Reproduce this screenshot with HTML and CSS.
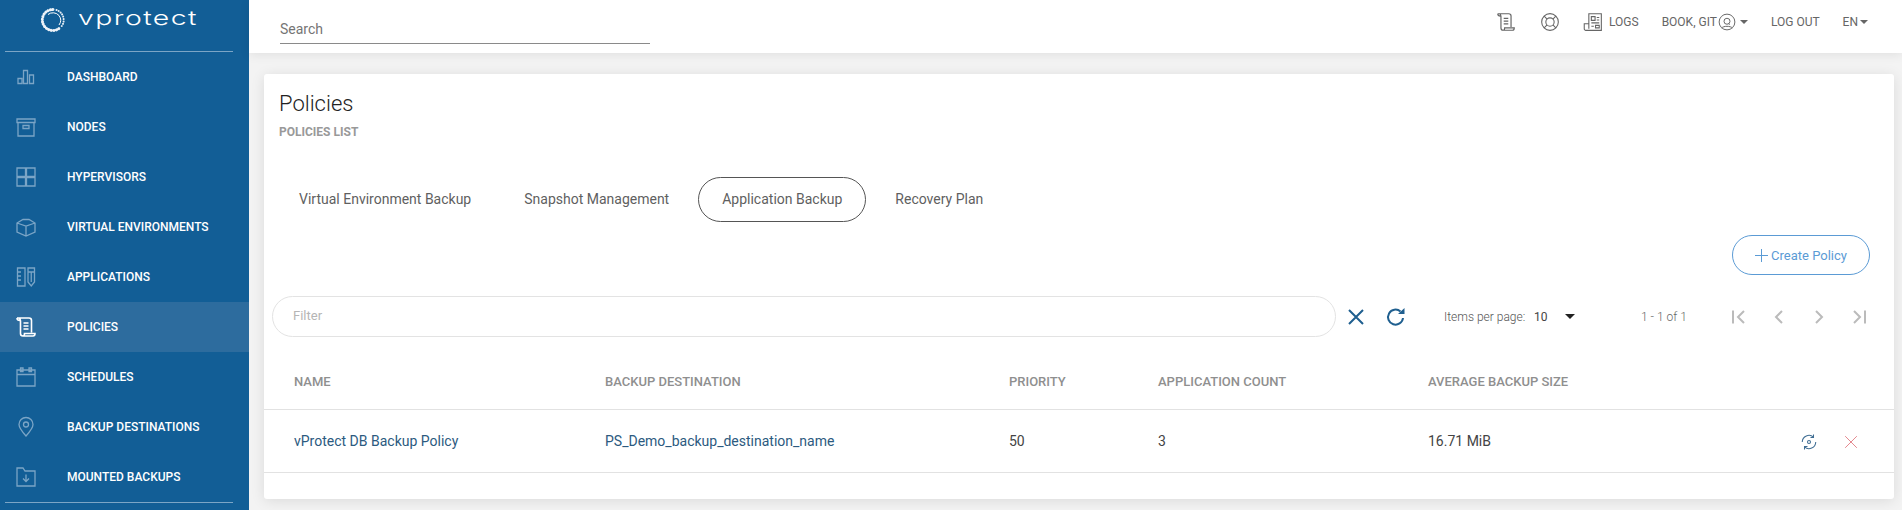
FILE: index.html
```html
<!DOCTYPE html>
<html lang="en">
<head>
<meta charset="UTF-8">
<title>vProtect - Policies</title>
<link rel="stylesheet" href="styles.css">
</head>
<body>
<aside class="sidebar">
  <div class="logo">
    <svg class="logo-mark" viewBox="0 0 26 26" width="26" height="26">
      <path d="M13 2.500A10.500 10.500 0 1 0 19 21.500" stroke="#eef3f8" stroke-width="3" stroke-dasharray="0.100 2.500" stroke-linecap="round"/>
      <path d="M16.500 3A10.500 10.500 0 0 1 21 20" stroke="#e4edf5" stroke-width="2" stroke-dasharray="0.100 2.300" stroke-linecap="round"/>
      <path d="M8 7.500a8 8 0 0 1 11 1A8 8 0 0 1 19 18" stroke="#ffffff" stroke-width="1"/>
    </svg>
    <span class="logo-text">vprotect</span>
  </div>
  <nav class="nav">
    <a class="nav-item">
      <svg class="nav-icon" viewBox="0 0 24 24"><path d="M4 13.500h4v5H4zM9.500 5.500h4v13h-4zM15.500 10h4v8.500h-4z"/></svg>
      <span>DASHBOARD</span>
    </a>
    <a class="nav-item">
      <svg class="nav-icon" viewBox="0 0 24 24"><path d="M3 4h18v3.500H3zM4 7.500V21h16V7.500M9 10.500h6v3H9z"/></svg>
      <span>NODES</span>
    </a>
    <a class="nav-item">
      <svg class="nav-icon" viewBox="0 0 24 24"><path d="M3 3h8.500v8.500H3zM12.500 3H21v8.500h-8.500zM3 12.500h8.500V21H3zM12.500 12.500H21V21h-8.500z"/></svg>
      <span>HYPERVISORS</span>
    </a>
    <a class="nav-item">
      <svg class="nav-icon" viewBox="0 0 24 24"><path d="M3 8l6-3.500h6L21 8v9l-9 4-9-4zM3 8l9 3 9-3M12 11v10"/></svg>
      <span>VIRTUAL ENVIRONMENTS</span>
    </a>
    <a class="nav-item">
      <svg class="nav-icon" viewBox="0 0 24 24"><path d="M3.500 3H11v18H3.500zM3.500 7H7M3.500 11H7M3.500 15H7M14 3h6.500v14l-3.250 4L14 17zM14 7h6.500M17.250 7v10"/></svg>
      <span>APPLICATIONS</span>
    </a>
    <a class="nav-item active">
      <svg class="nav-icon" viewBox="0 0 24 24"><path d="M3 3h12c1.500 0 2.500 1 2.500 2.500v12M3 3c0 1.500 1 2.500 3 2.500M5 3c1 .5 1.500 1.500 1.500 3v12.500c0 1.500 1 2.500 2.500 2.500h10c1 0 2-1 2-2.500H10.500c0 1.500-.5 2.500-1.500 2.500M9.500 8h5M9.500 11h5M9.500 14h5"/></svg>
      <span>POLICIES</span>
    </a>
    <a class="nav-item">
      <svg class="nav-icon" viewBox="0 0 24 24"><path d="M3 5h18v16H3zM3 9.500h18M6.500 3h2.500v3.500H6.500zM15 3h2.500v3.500H15z"/></svg>
      <span>SCHEDULES</span>
    </a>
    <a class="nav-item">
      <svg class="nav-icon" viewBox="0 0 24 24"><path d="M12 21c-4-4.500-7-8-7-11.500a7 7 0 0 1 14 0c0 3.500-3 7-7 11.500z"/><circle cx="12" cy="9.500" r="2.500"/></svg>
      <span>BACKUP DESTINATIONS</span>
    </a>
    <a class="nav-item">
      <svg class="nav-icon" viewBox="0 0 24 24"><path d="M3 3h6l2 3h10v15H3zM12 9.500v7M9 13.500l3 3 3-3"/></svg>
      <span>MOUNTED BACKUPS</span>
    </a>
  </nav>
</aside>

<div class="main">
  <header class="topbar">
    <div class="search">Search</div>
    <div class="top-actions">
      <svg class="top-icon scroll-icon" viewBox="0 0 24 24"><path d="M3 3h12c1.500 0 2.500 1 2.500 2.500v12M3 3c0 1.500 1 2.500 3 2.500M5 3c1 .5 1.500 1.500 1.500 3v12.500c0 1.500 1 2.500 2.500 2.500h10c1 0 2-1 2-2.500H10.500c0 1.500-.5 2.500-1.500 2.500M9.500 8h5M9.500 11h5M9.500 14h5"/></svg>
      <svg class="top-icon buoy-icon" viewBox="0 0 24 24"><circle cx="12" cy="12" r="10"/><circle cx="12" cy="12" r="5"/><path d="M5 5l3.500 3.500M19 5l-3.500 3.500M5 19l3.500-3.500M19 19l-3.500-3.500"/></svg>
      <svg class="top-icon logs-icon" viewBox="0 0 24 24"><path d="M7 20V2h15v20H3c-1 0-1.500-1-1.500-2v-6H7M10 5.500h4.500V10H10zM16.500 6.500h3M16.500 9.500h3M10 13h9.500M10 17h3M15 16h4.500v3H15z"/></svg>
      <span class="top-link logs-link">LOGS</span>
      <span class="top-link user-link">BOOK, GIT</span>
      <svg class="top-icon user-icon" viewBox="0 0 24 24"><circle cx="12" cy="12" r="10.500"/><circle cx="12" cy="11" r="4"/><path d="M5 20c2-3 12-3 14 0M14 14l1.500 1.500"/></svg>
      <span class="caret user-caret"></span>
      <span class="top-link logout-link">LOG OUT</span>
      <span class="top-link lang-link">EN</span>
      <span class="caret lang-caret"></span>
    </div>
  </header>

  <section class="card">
    <div class="card-head">
      <h1>Policies</h1>
      <p>POLICIES LIST</p>
    </div>

    <div class="tabs">
      <a class="tab">Virtual Environment Backup</a>
      <a class="tab">Snapshot Management</a>
      <a class="tab selected">Application Backup</a>
      <a class="tab">Recovery Plan</a>
    </div>

    <div class="create-row">
      <button class="create-btn"><span class="plus"></span>Create Policy</button>
    </div>

    <div class="toolbar">
      <div class="filter">Filter</div>
      <svg class="tool-icon clear-icon" viewBox="0 0 24 24"><path d="M5 5l14 14M19 5L5 19"/></svg>
      <svg class="tool-icon refresh-icon" viewBox="0 0 24 24"><path d="M19 13a7.500 7.500 0 1 1-2.500-6.500"/><path class="solid" d="M14 9h6.500V3z"/></svg>
      <span class="per-page">Items per page:</span>
      <span class="per-value">10</span>
      <span class="per-arrow"></span>
      <span class="range">1 - 1 of 1</span>
      <div class="pager">
        <svg viewBox="0 0 24 24"><path d="M6 5.500v13M17 6l-6 6 6 6"/></svg>
        <svg viewBox="0 0 24 24"><path d="M15 6l-6 6 6 6"/></svg>
        <svg viewBox="0 0 24 24"><path d="M9 6l6 6-6 6"/></svg>
        <svg viewBox="0 0 24 24"><path d="M7 6l6 6-6 6M18 5.500v13"/></svg>
      </div>
    </div>

    <div class="table">
      <div class="tr th">
        <div>NAME</div>
        <div>BACKUP DESTINATION</div>
        <div>PRIORITY</div>
        <div>APPLICATION COUNT</div>
        <div>AVERAGE BACKUP SIZE</div>
        <div></div>
      </div>
      <div class="tr td">
        <div class="link">vProtect DB Backup Policy</div>
        <div class="link">PS_Demo_backup_destination_name</div>
        <div>50</div>
        <div>3</div>
        <div>16.71 MiB</div>
        <div class="row-actions">
          <svg class="sync-icon" viewBox="0 0 24 24"><path d="M3 12a9 9 0 0 1 15-6.500M21 12a9 9 0 0 1-15 6.500M18 2v4h-4M6 22v-4h4"/><circle cx="12" cy="12" r="2"/></svg>
          <svg class="del-icon" viewBox="0 0 24 24"><path d="M2 2l20 20M22 2L2 22"/></svg>
        </div>
      </div>
    </div>
  </section>
</div>
</body>
</html>
```

FILE: styles.css
```css
* {
  box-sizing: border-box;
}
html, body {
  height: 100%;
}
body {
  margin: 0;
  display: flex;
  overflow: hidden;
  font-family: Roboto, "Liberation Sans", sans-serif;
  font-size: 14px;
  color: #555;
  background-color: #f3f3f3;
}
svg {
  fill: none;
  stroke-width: 1.3;
  display: block;
}

/* sidebar */
.sidebar {
  width: 249px;
  flex: none;
  background-color: #125e96;
  color: #fff;
}
.logo {
  height: 52px;
  margin: 0 16px 0 5px;
  padding: 7px 0 0 35px;
  display: flex;
  align-items: flex-start;
  border-bottom: 1px solid #7ba5c6;
}
.logo-mark {
  flex: none;
}
.logo-text {
  margin: -1px 0 0 12px;
  font-family: Inter, sans-serif;
  font-size: 20px;
  font-weight: 300;
  line-height: 24px;
  letter-spacing: 1px;
  transform: scaleX(1.42);
  transform-origin: left center;
}
.nav {
  padding-bottom: 50px;
  height: 451px;
  border-bottom: 1px solid #7ba5c6;
  margin-right: 16px;
  margin-left: 5px;
}
.nav-item {
  height: 50px;
  margin: 0 -16px 0 -5px;
  padding-left: 14px;
  display: flex;
  align-items: center;
  gap: 29px;
  font-size: 12px;
  font-weight: 500;
  width: 249px;
}
.nav-item.active {
  background-color: #2d6c9e;
}
.nav-icon {
  width: 24px;
  height: 24px;
  flex: none;
  stroke: #7ba5c6;
}
.active .nav-icon {
  stroke: #fff;
  stroke-width: 1.6;
}

/* top bar */
.main {
  flex: 1;
  min-width: 0;
}
.topbar {
  height: 53px;
  padding-left: 31px;
  background-color: #fff;
  box-shadow: 0 2px 10px rgba(0, 0, 0, 0.08);
  display: flex;
  align-items: flex-start;
  justify-content: space-between;
}
.search {
  width: 370px;
  height: 30px;
  margin-top: 14px;
  padding-top: 7px;
  font-size: 14px;
  line-height: 16px;
  color: #757575;
  border-bottom: 1px solid #8a8a8a;
}
.top-actions {
  height: 44px;
  padding-right: 34px;
  display: flex;
  align-items: center;
  font-size: 12px;
  color: #666;
}
.top-icon {
  width: 20px;
  height: 20px;
  stroke: #666;
  flex: none;
}
.scroll-icon {
  width: 22px;
  height: 22px;
}
.buoy-icon {
  margin-left: 23px;
}
.logs-icon {
  margin-left: 23px;
}
.logs-link {
  margin-left: 6px;
}
.user-link {
  margin-left: 23px;
}
.user-icon {
  width: 18px;
  height: 18px;
  margin-left: 1px;
}
.caret {
  margin-left: 4px;
  border-top: 4px solid #666;
  border-left: 4px solid transparent;
  border-right: 4px solid transparent;
}
.logout-link {
  margin-left: 23px;
}
.lang-link {
  margin-left: 23px;
}
.lang-caret {
  margin-left: 2px;
}

/* card */
.card {
  width: 1630px;
  height: 425px;
  margin: 21px 0 0 15px;
  background-color: #fff;
  border-radius: 3px;
  box-shadow: 0 2px 14px rgba(0, 0, 0, 0.1);
}
.card-head {
  padding: 15px 15px 0;
}
.card-head h1 {
  margin: 0;
  font-size: 22px;
  font-weight: 300;
  line-height: 30px;
  color: #222;
}
.card-head p {
  margin: 5px 0 0;
  font-size: 12px;
  font-weight: 700;
  line-height: 16px;
  color: #999;
}
.tabs {
  margin: 37px 0 0 11px;
  display: flex;
  gap: 5px;
}
.tab {
  height: 45px;
  padding: 0 23px 2px;
  display: flex;
  align-items: center;
  color: #5f5f5f;
  border: 1px solid transparent;
  border-radius: 23px;
}
.tab.selected {
  border-color: #555;
}
.create-row {
  margin: 13px 24px 0 0;
  display: flex;
  justify-content: flex-end;
}
.create-btn {
  width: 138px;
  height: 40px;
  padding: 0;
  display: flex;
  align-items: center;
  justify-content: center;
  gap: 3px;
  font-family: inherit;
  font-size: 13px;
  color: #5b9bd5;
  background: #fff;
  border: 1px solid #5b9bd5;
  border-radius: 20px;
}
.plus {
  width: 13px;
  height: 13px;
  background: linear-gradient(#5b9bd5, #5b9bd5) center / 100% 1px no-repeat,
    linear-gradient(#5b9bd5, #5b9bd5) center / 1px 100% no-repeat;
}

/* filter and paging */
.toolbar {
  height: 41px;
  margin: 21px 0 0 8px;
  display: flex;
  align-items: center;
}
.filter {
  width: 1064px;
  height: 41px;
  padding: 0 20px 2px;
  display: flex;
  align-items: center;
  font-size: 13px;
  color: #b5b5b5;
  border: 1px solid #e3e3e3;
  border-radius: 21px;
}
.tool-icon {
  width: 24px;
  height: 24px;
  stroke: #1f5f8f;
  stroke-width: 2;
}
.clear-icon {
  margin-left: 8px;
}
.refresh-icon {
  margin-left: 16px;
}
.refresh-icon .solid {
  fill: #1f5f8f;
  stroke: none;
}
.per-page {
  width: 90px;
  margin-left: 36px;
  font-size: 12px;
  font-weight: 300;
  color: #555;
}
.per-value {
  width: 31px;
  font-size: 12px;
  color: #444;
}
.per-arrow {
  border-top: 5px solid #222;
  border-left: 5px solid transparent;
  border-right: 5px solid transparent;
}
.range {
  width: 84px;
  margin-left: 66px;
  font-size: 12px;
  font-weight: 300;
  color: #666;
}
.pager {
  margin-left: 2px;
  display: flex;
  gap: 16px;
}
.pager svg {
  width: 24px;
  height: 24px;
  stroke: #bbb;
  stroke-width: 2;
}

/* table */
.table {
  margin-top: 18px;
}
.tr {
  display: grid;
  grid-template-columns: 311px 404px 149px 270px 1fr 120px;
  padding-left: 30px;
  align-items: center;
  border-bottom: 1px solid #e2e2e2;
}
.th {
  height: 55px;
  padding-bottom: 2px;
  font-size: 13px;
  font-weight: 500;
  color: #8f8f8f;
}
.td {
  height: 63px;
  padding-bottom: 1px;
  font-size: 14px;
  color: #444;
}
.link {
  color: #2c5a80;
}
.row-actions {
  padding: 2px 36px 0 0;
  display: flex;
  align-items: center;
  justify-content: flex-end;
  gap: 26px;
}
.sync-icon {
  width: 18px;
  height: 18px;
  stroke: #3f6d93;
  stroke-width: 1.4;
}
.del-icon {
  width: 14px;
  height: 14px;
  stroke: #e0787f;
  stroke-width: 1.5;
}
```
